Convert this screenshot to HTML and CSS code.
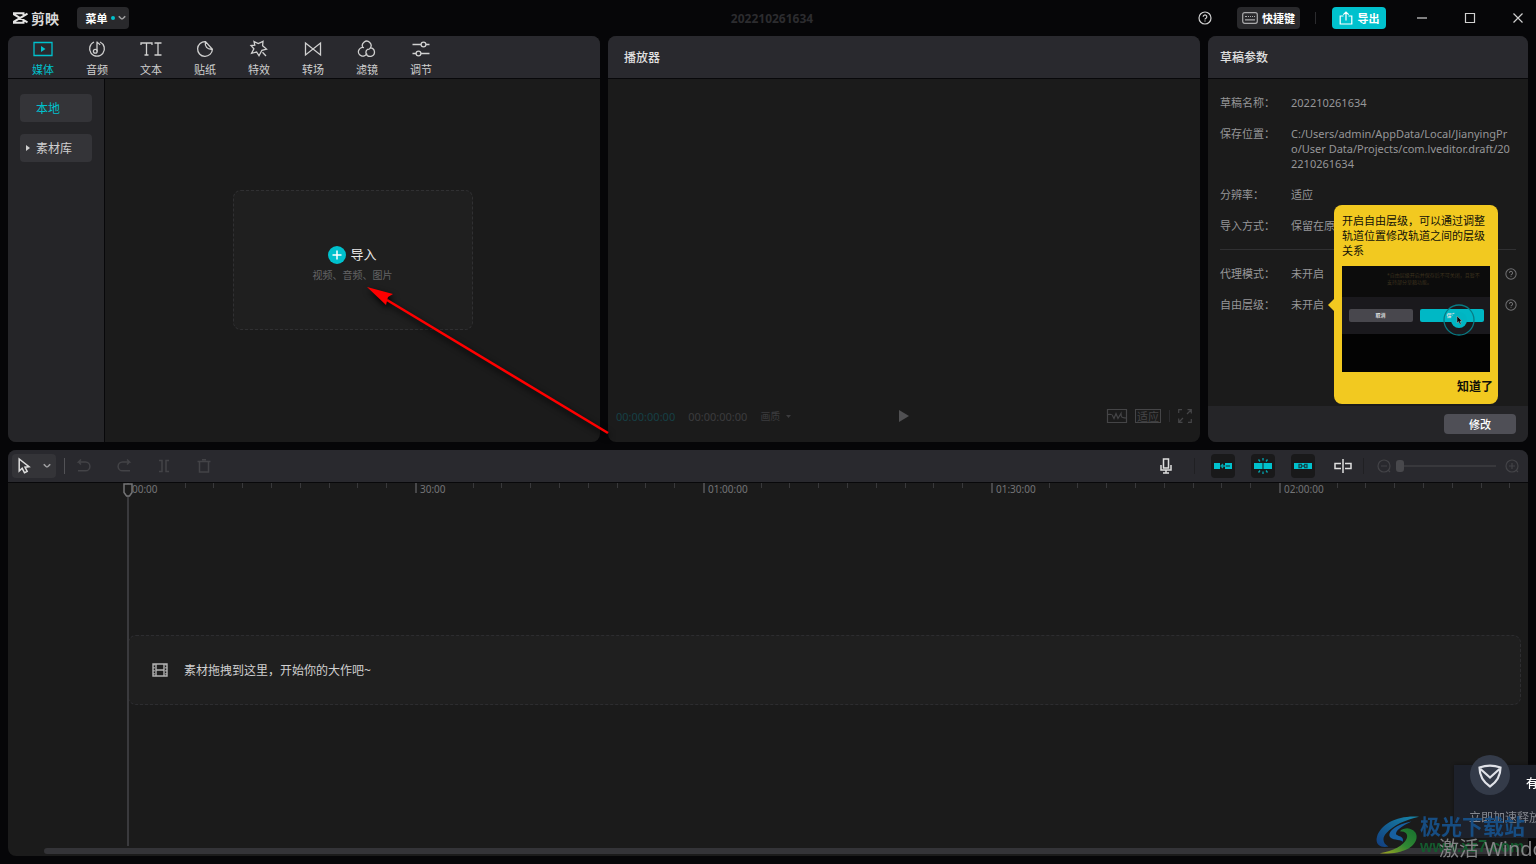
FILE: index.html
```html
<!DOCTYPE html>
<html lang="zh-CN">
<head>
<meta charset="utf-8">
<title>剪映</title>
<link rel="stylesheet" href="styles.css">
</head>
<body>
<svg class="defs" aria-hidden="true">
  <symbol id="i-help" viewBox="0 0 14 14"><circle cx="7" cy="7" r="6"/><path d="M5.2 5.7a1.8 1.8 0 1 1 2.7 1.6c-.6.3-.9.6-.9 1.2M7 9.6v1"/></symbol>
  <symbol id="i-chevron" viewBox="0 0 8 6"><path d="M.8 1.2C2 2.6 3 4 4 4s2-1.400 3.200-2.800"/></symbol>
</svg>
<div class="app">
  <header class="titlebar">
    <div class="title-left">
      <svg class="logo" viewBox="0 0 16 12" width="16" height="12"><path d="M15.500 1.700 2 9.600v1.100h9.500V9M15.500 10.300 2 2.400V1.300h9.500V3"/></svg>
      <span class="brand">剪映</span>
      <button class="chip menu">菜单<i class="dot"></i><svg class="stroke soft" width="8" height="6"><use href="#i-chevron"/></svg></button>
    </div>
    <h1 class="doc-title">202210261634</h1>
    <div class="title-right">
      <button class="plain" aria-label="帮助"><svg class="stroke" width="14" height="14"><use href="#i-help"/></svg></button>
      <button class="chip keys"><svg class="stroke keyboard" width="16" height="12" viewBox="0 0 16 12"><rect x=".7" y=".7" width="14.600" height="10.600" rx="2"/><path d="M3 4.500h2M6 4.500h1M8 4.500h1M10 4.500h1M12 4.500h1M3 7.800h10"/></svg>快捷键</button>
      <i class="bar title-bar-sep"></i>
      <button class="chip export"><svg class="stroke" width="14" height="14" viewBox="0 0 14 14"><path d="M4.500 5H1.200v8h11.600V5H9.500M7 9.500V1.200M4.300 3.600 7 1l2.700 2.600"/></svg>导出</button>
      <div class="window-buttons">
        <button class="plain" aria-label="最小化"><svg class="stroke" width="12" height="12"><path d="M1 6h10"/></svg></button>
        <button class="plain" aria-label="最大化"><svg class="stroke" width="12" height="12"><path d="M1.500 1.500h9v9h-9z"/></svg></button>
        <button class="plain" aria-label="关闭"><svg class="stroke" width="12" height="12"><path d="m1.500 1.500 9 9m0-9-9 9"/></svg></button>
      </div>
    </div>
  </header>

  <div class="stage">
  <main class="workspace">
    <section class="panel media">
      <nav class="tabs">
        <button class="tab active"><svg width="20" height="18" viewBox="0 0 20 18"><path d="M1 2.500h18v13H1z"/><path class="fill" d="m8 6 4.500 3L8 12z"/></svg>媒体</button>
        <button class="tab"><svg width="20" height="18" viewBox="0 0 20 18"><path d="M7 2a7.400 7.400 0 1 0 6 0M10 11.500V1.500c.3 2 2.500 2 3 3.500"/><circle cx="8.300" cy="11.300" r="1.900"/></svg>音频</button>
        <button class="tab"><svg width="22" height="18" viewBox="0 0 22 18"><path d="M1 5V3h11v2M6.500 3v12M4.500 15h4M14.500 3h7M18 3v12M14.500 15h7"/></svg>文本</button>
        <button class="tab"><svg width="20" height="18" viewBox="0 0 20 18"><path d="M10.500 1.600a7.400 7.400 0 1 0 6.900 7.600zM10.500 1.600c-1 4.600 1.600 8.200 6.900 7.600"/></svg>贴纸</button>
        <button class="tab"><svg width="20" height="18" viewBox="0 0 20 18"><path d="m5 1.500 4.300 2L14 1.300l-.4 4.500 3.900 3.300-4.600 1.200L10 15.800 7.600 12l-5 1.300 2.300-4.500L2 5.500l3.800-.4zM13.500 12.300l3.500 3.700"/></svg>特效</button>
        <button class="tab"><svg width="20" height="18" viewBox="0 0 20 18"><path d="m2.500 3 15 12V3l-15 12z"/></svg>转场</button>
        <button class="tab"><svg width="20" height="18" viewBox="0 0 20 18"><path d="M6.200 8A4.300 4.300 0 1 1 13 8.300c-1 1.200-2.300 1.200-3 1M7 7.700a4.300 4.300 0 1 0 2.800 5.500M13.300 7.800a4.300 4.300 0 1 1-4.200 5.700c-.5-1.900.2-3 1-3.700"/></svg>滤镜</button>
        <button class="tab"><svg width="20" height="18" viewBox="0 0 20 18"><path d="M1.500 4.500H10m5 0h3.500M1.500 13.500H5m5 0h8.500"/><circle cx="12.500" cy="4.500" r="2.400"/><circle cx="7.500" cy="13.500" r="2.400"/></svg>调节</button>
      </nav>
      <div class="media-body">
        <aside class="sidebar">
          <button class="side-item active">本地</button>
          <button class="side-item"><svg width="4" height="6"><path d="m0 0 4 3-4 3z"/></svg>素材库</button>
        </aside>
        <div class="media-content">
          <div class="dropbox">
            <button class="import"><svg width="18" height="18"><circle cx="9" cy="9" r="9"/><path d="M9 4.500v9M4.500 9h9"/></svg>导入</button>
            <p>视频、音频、图片</p>
            <svg class="pointer" width="244" height="150"><path class="shaft" d="M241 146 20 13"/><path class="head" d="M0 0 26 7l-5 3-2 8z"/></svg>
          </div>
        </div>
      </div>
    </section>

    <section class="panel player">
      <h2 class="panel-head">播放器</h2>
      <div class="player-view"></div>
      <div class="player-bar">
        <div class="times"><span class="now">00:00:00:00</span><span>00:00:00:00</span><button class="plain quality">画质<svg width="5" height="3"><path d="M0 0h5L2.500 3z"/></svg></button></div>
        <button class="plain play" aria-label="播放"><svg width="10" height="12"><path d="m0 0 10 6-10 6z"/></svg></button>
        <div class="player-tools">
          <button class="plain" aria-label="波形"><svg class="stroke" width="20" height="14" viewBox="0 0 20 14"><path d="M.5.5h19v13H.5zM1 5.500c3 0 4-1 5 2l1 2 2-5 2 5 3-5c0 5 2 4 5 4.500"/></svg></button>
          <button class="fit">适应</button>
          <i class="bar"></i>
          <button class="plain" aria-label="全屏"><svg class="stroke" width="14" height="14" viewBox="0 0 14 14"><path d="M.7 4V.7H4M9.500.7h3.800v3.800M13.300 10v3.300H10M4.500 13.300H.7V9.500M13 1 9 5M1 13l4-4"/></svg></button>
        </div>
      </div>
    </section>

    <section class="panel params">
      <h2 class="panel-head">草稿参数</h2>
      <div class="param-list">
        <div class="row"><span class="name">草稿名称：</span><span>202210261634</span></div>
        <div class="row"><span class="name">保存位置：</span><span class="path">C:/Users/admin/AppData/Local/JianyingPr<br>o/User Data/Projects/com.lveditor.draft/20<br>2210261634</span></div>
        <div class="row"><span class="name">分辨率：</span><span>适应</span></div>
        <div class="row"><span class="name">导入方式：</span><span>保留在原</span></div>
        <hr>
        <div class="row"><span class="name">代理模式：</span><span>未开启</span><svg class="stroke info" width="12" height="12"><use href="#i-help"/></svg></div>
        <div class="row anchor"><span class="name">自由层级：</span><span>未开启</span><svg class="stroke info" width="12" height="12"><use href="#i-help"/></svg>
          <div class="tip" role="dialog">
            <p>开启自由层级，可以通过调整<br>轨道位置修改轨道之间的层级<br>关系</p>
            <div class="preview">
              <div class="preview-note">*自由层级开启并保存后不可关闭，且暂不<br>支持部分草稿功能。</div>
              <div class="preview-buttons"><span>取消</span><span class="save">保存</span></div>
              <svg class="click" width="32" height="32" viewBox="0 0 32 32"><circle class="ring" cx="16" cy="16" r="15"/><circle class="core" cx="16" cy="16" r="8"/><path d="m14 12 5 5h-2l1 3-1 .5-1.500-3L14 19z"/></svg>
            </div>
            <button class="got-it">知道了</button>
          </div>
        </div>
      </div>
      <footer class="param-foot"><button class="modify">修改</button></footer>
    </section>
  </main>

  <section class="panel timeline">
    <div class="toolbar">
      <div class="tools-left">
        <button class="select-tool" aria-label="选择"><svg class="stroke bright" width="13" height="16" viewBox="0 0 13 16"><path d="M1.200 1v12l3-2.700 2.300 4.500 2.700-1.300-2.200-4.300 4-.5z"/></svg><svg class="stroke soft" width="8" height="6"><use href="#i-chevron"/></svg></button>
        <i class="bar light"></i>
        <button class="plain tool" aria-label="撤销"><svg class="stroke" width="14" height="14" viewBox="0 0 14 14"><path d="M4 .5 1.500 3h7a4.400 4.400 0 0 1 0 8.800H1M1.500 3 4 5.500"/></svg></button>
        <button class="plain tool" aria-label="重做"><svg class="stroke" width="14" height="14" viewBox="0 0 14 14"><path d="M10 .5 12.500 3h-7a4.400 4.400 0 0 0 0 8.800H13M12.500 3 10 5.500"/></svg></button>
        <button class="plain tool" aria-label="分割"><svg class="stroke" width="12" height="14" viewBox="0 0 12 14"><path d="M1 1.500h3v11H1M11 1.500H8v11h3"/></svg></button>
        <button class="plain tool" aria-label="删除"><svg class="stroke" width="14" height="14" viewBox="0 0 14 14"><path d="M.5 2.500h13M2.500 3v10h9V3M5 .7h4"/></svg></button>
      </div>
      <div class="tools-right">
        <button class="plain tool mic" aria-label="录音"><svg class="stroke bright" width="12" height="16" viewBox="0 0 12 16"><path d="M3.500 1h5v9h-5zM1 7v5h10V7M6 12v3M3 15h6"/></svg></button>
        <i class="bar mic-sep"></i>
        <button class="toggle" aria-label="主轨磁吸"><svg width="18" height="10" viewBox="0 0 18 10"><path d="M0 2h6v6H0zM11 2h7v6h-7z"/><path class="cut" d="M12 5h4"/><path class="cy" d="m9 3-2 2 2 2M8 5h4"/></svg></button>
        <button class="toggle" aria-label="自动吸附"><svg width="18" height="16" viewBox="0 0 18 16"><path d="M0 5h8v6H0zM10 5h8v6h-8z"/><path d="M8.500 5h1v6h-1z"/><path class="cy" d="M9 0v2.500M4.500 1.500 6 3.500M13.500 1.500 12 3.500M9 13.500V16M4.500 14.500 6 12.500M13.500 14.500 12 12.500"/></svg></button>
        <button class="toggle" aria-label="联动"><svg width="18" height="10" viewBox="0 0 18 10"><path d="M0 2h18v6H0z"/><path class="cut" d="M8 3.500H5v3h3M10 3.500h3v3h-3M7 5h4"/></svg></button>
        <button class="plain tool" aria-label="预览轴"><svg class="stroke bright" width="18" height="14" viewBox="0 0 18 14"><path d="M7 4.500H1v5h6M11 4.500h6v5h-6M9 0v14"/></svg></button>
        <i class="bar zoom-sep"></i>
        <div class="zoom">
          <button class="plain" aria-label="缩小"><svg class="stroke" width="14" height="14"><circle cx="7" cy="7" r="6"/><path d="M4 7h6M11 11l2 2"/></svg></button>
          <input type="range" min="0" max="100" value="0" aria-label="时间线缩放">
          <button class="plain" aria-label="放大"><svg class="stroke" width="14" height="14"><circle cx="7" cy="7" r="6"/><path d="M4 7h6M7 4v6M11 11l2 2"/></svg></button>
        </div>
      </div>
    </div>
    <div class="tracks">
      <div class="ruler">
        <div class="major"><span>00:00</span><i></i><i></i><i></i><i></i><i></i><i></i><i></i><i></i></div>
        <div class="major"><span>30:00</span><i></i><i></i><i></i><i></i><i></i><i></i><i></i><i></i></div>
        <div class="major"><span>01:00:00</span><i></i><i></i><i></i><i></i><i></i><i></i><i></i><i></i></div>
        <div class="major"><span>01:30:00</span><i></i><i></i><i></i><i></i><i></i><i></i><i></i><i></i></div>
        <div class="major"><span>02:00:00</span><i></i><i></i><i></i><i></i><i></i><i></i><i></i><i></i></div>
      </div>
      <div class="track-area">
        <div class="track-drop"><svg class="film" width="16" height="14" viewBox="0 0 16 14"><path d="M1 1h14v12H1zM4 1v12M12 1v12M4 7h8"/><path class="holes" d="M2 1v12M14 1v12"/></svg>素材拖拽到这里，开始你的大作吧~</div>
      </div>
      <div class="playhead"><svg width="10" height="14" viewBox="0 0 10 14"><path d="M1 1h8v8.500L6.500 13h-3L1 9.500z"/></svg></div>
      <div class="scroll"></div>
    </div>
  </section>
  </div>
</div>

<aside class="toast">
  <svg class="shield" width="40" height="40" viewBox="0 0 40 40"><circle cx="20" cy="20" r="20"/><path d="M9.500 12.500c7-2.500 14-2.500 21 0 0 8-3 14-10.500 19-7.500-5-10.500-11-10.500-19zM10.500 14 20 22.500l9.500-8.500"/></svg>
  <strong>有</strong>
  <span>立即加速释放</span>
</aside>
<div class="watermark">
  <svg width="44" height="42" viewBox="0 0 46 42">
    <defs><linearGradient id="sw" x1="0" y1="1" x2="1" y2="0"><stop offset="0" stop-color="#123d80"/><stop offset="1" stop-color="#1787a8"/></linearGradient><linearGradient id="sg" x1="0" y1="1" x2="1" y2="0"><stop offset="0" stop-color="#a8a620"/><stop offset=".5" stop-color="#2f8733"/><stop offset="1" stop-color="#17702f"/></linearGradient></defs>
    <path fill="url(#sw)" d="M45 2C24 0 5 9 1 23c-2 7 3 12 12 10-6-3-7-9-2-14C18 11 31 5 45 2z"/>
    <path fill="#1760a0" d="M37 7C21 10 13 17 14 22c2 5 11 3 14 6 2-7-8-5-7-9 1-4 8-8 16-12z"/>
    <path fill="url(#sg)" d="M33 14c13 2 12 15 1 21C25 40 12 41 4 40c14-2 25-8 28-15 2-5-1-8-7-8 2-2 5-3 8-3z"/>
  </svg>
  <div class="mark-text"><b>极光下载站</b><em>www.xz7.com</em></div>
</div>
<div class="activate">激活 Windows</div>
</body>
</html>
```
FILE: styles.css
```css
* { box-sizing: border-box; }
body {
  margin: 0;
  background: #060608;
  color: #d0d0d0;
  font: 11px/15px "Noto Sans", "Noto Sans CJK SC", sans-serif;
  overflow: hidden;
}
h1, h2, p { margin: 0; font-weight: 400; }
button { font: inherit; color: inherit; border: 0; padding: 0; background: none; display: flex; align-items: center; justify-content: center; }
svg { display: block; flex: none; }
.defs { position: absolute; width: 0; height: 0; }
.stroke { fill: none; stroke: currentColor; stroke-width: 1.2; overflow: visible; }
.bright { color: #dedede; stroke-width: 1.5; }
.soft { color: #a0a0a2; stroke-width: 1.6; }
.bar { width: 1px; height: 12px; background: #2b2b2e; flex: none; }

.app { min-height: 100vh; display: flex; flex-direction: column; padding: 0 8px 8px; }
.stage { flex: 1; display: grid; grid-template-rows: minmax(0, 1fr) minmax(0, 1fr); gap: 8px; }
.workspace { display: grid; grid-template-columns: minmax(0, 1fr) minmax(0, 1fr) 320px; gap: 8px; }
.panel { background: #1b1b1b; border-radius: 8px; display: flex; flex-direction: column; min-width: 0; }
.panel-head { height: 43px; padding: 0 16px; display: flex; align-items: center; font-size: 12px; font-weight: 500; color: #e0e0e0; background: #29292e; border-bottom: 1px solid #08080a; border-radius: 8px 8px 0 0; flex: none; }

.titlebar { height: 36px; display: grid; grid-template-columns: 1fr auto 1fr; align-items: center; margin-right: -8px; }
.title-left, .title-right { display: flex; align-items: center; }
.title-left { padding-left: 4px; }
.title-right { justify-content: flex-end; }
.logo { fill: none; stroke: #e4e4e4; stroke-width: 2; }
.brand { font-size: 14px; font-weight: 700; margin: 0 18px 0 3px; color: #d8d8d8; }
.chip { height: 22px; border-radius: 4px; background: #29292c; color: #fff; font-weight: 700; }
.menu { width: 52px; gap: 3px; padding-left: 5px; }
.dot { width: 4px; height: 4px; border-radius: 50%; background: #00c1cd; }
.doc-title { font-size: 12px; font-weight: 700; color: #2c2c2f; }
.keys { width: 63px; gap: 4px; margin-left: 25px; }
.keyboard { color: #aaaaac; }
.title-bar-sep { margin: 0 16px 0 15px; }
.export { width: 54px; gap: 5px; background: #00c1cd; margin-right: 18px; }
.window-buttons { display: flex; gap: 12px; }
.window-buttons button { width: 36px; height: 36px; }

.tabs { height: 43px; display: flex; padding: 0 8px; background: #29292e; border-bottom: 1px solid #08080a; border-radius: 8px 8px 0 0; flex: none; }
.tab { width: 54px; flex-direction: column; justify-content: flex-start; padding-top: 4px; gap: 4px; }
.tab svg { fill: none; stroke: currentColor; stroke-width: 1.3; }
.tab .fill { fill: currentColor; stroke: none; }
.active { color: #00c1cd; }
.media-body { flex: 1; display: flex; }
.sidebar { width: 97px; padding: 15px 12px; display: flex; flex-direction: column; gap: 12px; background: #252528; border-right: 1px solid #08080a; border-radius: 0 0 0 8px; flex: none; }
.side-item { height: 28px; border-radius: 4px; background: #343438; font-size: 12px; justify-content: flex-start; padding-left: 16px; }
.side-item svg { fill: #d0d0d0; margin: 0 6px 0 -10px; }
.media-content { flex: 1; display: grid; place-items: center; padding-bottom: 1px; }
.dropbox { position: relative; width: 240px; height: 140px; border: 1px dashed #303032; border-radius: 8px; background: #1f1f1f; display: flex; flex-direction: column; align-items: center; justify-content: center; gap: 4px; padding-top: 8px; color: #646466; font-size: 10px; }
.import { height: 18px; gap: 4px; font-size: 13px; color: #e8e8e8; }
.import svg { fill: #00c1cd; stroke: #fff; stroke-width: 0; }
.import path { stroke-width: 1.5; }
.pointer { position: absolute; left: 133px; top: 96px; z-index: 3; filter: drop-shadow(1px 3px 3px #000); overflow: visible; }
.shaft { stroke: #f00; stroke-width: 2.6; }
.head { fill: #f00; }

.player-view { flex: 1; }
.player-bar { height: 52px; padding: 0 8px; display: grid; grid-template-columns: 1fr auto 1fr; align-items: center; color: #3c3c3e; }
.times { display: flex; gap: 13px; }
.now { color: #164046; }
.quality { gap: 6px; font-size: 10px; }
.quality svg, .play svg { fill: currentColor; }
.play { color: #505052; }
.player-tools { display: flex; align-items: center; justify-content: flex-end; gap: 8px; color: #454547; }
.fit { border: 1px solid #454547; width: 26px; height: 14px; }

.params .panel-head { padding: 0 12px; }
.param-list { flex: 1; padding: 16px 12px; display: flex; flex-direction: column; gap: 16px; color: #969698; }
.row { display: flex; }
.name { width: 71px; flex: none; }
.path { white-space: nowrap; }
hr { width: 100%; border: 0; height: 1px; background: #303032; margin: 0; }
.info { margin-left: auto; align-self: center; color: #707072; margin-right: -1px; }
.anchor { position: relative; }
.param-foot { height: 36px; padding: 0 12px; display: flex; align-items: center; justify-content: flex-end; background: #252528; border-radius: 0 0 8px 8px; }
.modify { width: 72px; height: 20px; border-radius: 4px; background: #4f4f56; color: #fff; font-weight: 500; }
.tip { position: absolute; left: 114px; top: -92px; width: 164px; height: 199px; padding: 8px; background: #f2c920; color: #101008; border-radius: 8px; z-index: 2; }
.tip::before { content: ""; position: absolute; left: -6px; top: 94px; border: solid transparent; border-width: 6px 6px 6px 0; border-right-color: #f2c920; }
.tip p { white-space: nowrap; }
.preview { position: relative; height: 106px; margin-top: 8px; background: #030303; display: flex; flex-direction: column; overflow: hidden; }
.preview-note { height: 31px; padding: 6px 0 0 45px; font-size: 5px; line-height: 7px; color: #3c321e; background: #0c0c0c; white-space: nowrap; }
.preview-buttons { height: 37px; background: #1a191d; display: grid; grid-template-columns: 64px 64px; justify-content: center; align-items: center; gap: 7px; }
.preview-buttons span { height: 13px; border-radius: 2px; background: #48474d; color: #ddd; text-align: center; font-size: 5px; line-height: 13px; font-weight: 700; }
.preview-buttons .save { background: #00b8c5; }
.click { position: absolute; left: 101px; top: 38px; }
.ring { fill: none; stroke: #087c85; stroke-width: 1.3; }
.core { fill: #00b5c2; }
.click path { fill: #060608; stroke: #aaa; stroke-width: .5; }
.got-it { margin: 7px -3px 0 auto; font-size: 12px; font-weight: 700; line-height: 16px; }

.toolbar { height: 33px; background: #29292e; border-bottom: 1px solid #08080a; border-radius: 8px 8px 0 0; display: flex; justify-content: space-between; flex: none; }
.tools-left, .tools-right, .zoom { display: flex; align-items: center; }
.tools-left { padding-left: 4px; color: #434347; }
.tools-left .tool .stroke { stroke-width: 1.5; }
.tools-right { padding-right: 9px; }
.select-tool { width: 44px; height: 24px; gap: 12px; border-radius: 4px; background: #343438; }
.light { height: 16px; background: #525256; margin: 0 7px 0 8px; }
.tool { width: 24px; height: 24px; }
.tools-left .tool + .tool { margin-left: 16px; }
.mic-sep { margin: 0 16px; height: 16px; background: #202023; }
.toggle { width: 24px; height: 24px; border-radius: 4px; background: #19191a; margin-right: 16px; }
.toggle svg { fill: #00c1cd; }
.toggle .cut { fill: none; stroke: #12494e; stroke-width: 1.3; }
.toggle .cy { fill: none; stroke: #00a6b0; stroke-width: 1.3; }
.zoom-sep { margin: 0 13px 0 8px; height: 16px; background: #202023; }
.zoom { color: #434347; gap: 5px; }
.zoom input { appearance: none; width: 100px; height: 12px; margin: 0 4px 0 0; background: linear-gradient(#38383c, #38383c) center / 100% 2px no-repeat; }
.zoom input::-webkit-slider-thumb { appearance: none; width: 8px; height: 12px; border-radius: 3px; background: #48484c; }

.tracks { flex: 1; position: relative; display: flex; flex-direction: column; padding: 0 7px 2px 0; }
.ruler { display: flex; height: 14px; margin: 0 -7px 0 119px; overflow: hidden; color: #747476; }
.major { flex: none; width: 288px; display: grid; grid-template-columns: repeat(10, 1fr); align-items: start; background: linear-gradient(#48484a, #48484a) 0 0 / 2px 10px no-repeat; }
.major span { grid-column: 1 / 3; height: 14px; line-height: 12px; padding-left: 5px; font-size: 10px; }
.major i { height: 5px; border-left: 1px solid #39393b; }
.track-area { flex: 1; display: flex; align-items: center; padding: 0 0 5px 120px; }
.track-drop { flex: 1; height: 70px; padding-left: 23px; display: flex; align-items: center; gap: 16px; border: 1px dashed #2d2d30; border-radius: 8px; background: #1f1f1f; font-size: 12px; }
.film { fill: none; stroke: #b2b2b2; stroke-width: 1.4; }
.holes { stroke-dasharray: 1.500 1.500; }
.playhead { position: absolute; left: 119px; top: 0; bottom: 10px; width: 2px; background: #3a3a3d; }
.playhead svg { margin-left: -4px; fill: #1b1b1b; stroke: #747476; stroke-width: 1.5; }
.scroll { height: 6px; margin: 0 8px 0 36px; border-radius: 3px; background: #343438; }

.toast { position: fixed; right: 0; bottom: 26px; width: 82px; height: 73px; padding: 10px 0 0 15px; background: #1d212b; box-shadow: 0 0 3px #111; color: #858890; white-space: nowrap; z-index: 4; font-size: 12px; display: flex; flex-direction: column; clip-path: inset(-20px 0 -4px -4px); }
.toast strong { padding-left: 57px; color: #fff; font-weight: 500; height: 35px; line-height: 17px; }
.shield { position: absolute; left: 16px; top: -10px; }
.shield circle { fill: #343b49; }
.shield path { fill: none; stroke: #e0e2e8; stroke-width: 2.2; }
.watermark { position: fixed; right: 11px; bottom: 8px; display: flex; z-index: 5; }
.mark-text { display: flex; flex-direction: column; width: 105px; }
.mark-text b { font-size: 21px; line-height: 24px; color: #174d82; white-space: nowrap; }
.mark-text em { font: 700 16px/18px "Liberation Sans", sans-serif; color: #145b2e; white-space: nowrap; }
.activate { position: fixed; right: 0; bottom: 1px; width: 97px; overflow: hidden; white-space: nowrap; font-size: 20px; line-height: 28px; color: #838385; z-index: 6; }
```
